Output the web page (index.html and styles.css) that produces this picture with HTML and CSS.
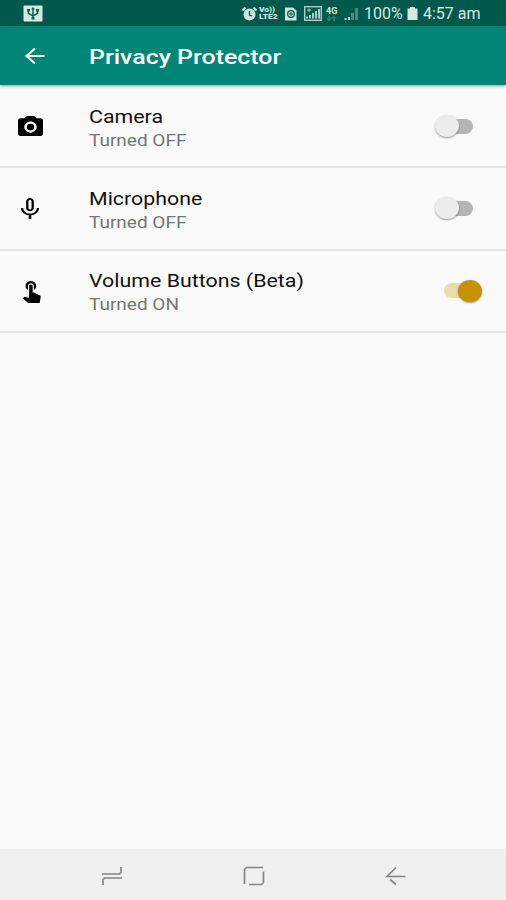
FILE: index.html
```html
<!DOCTYPE html>
<html lang="en">
  <head>
    <meta charset="UTF-8" />
    <meta name="viewport" content="width=device-width, initial-scale=1.0" />
    <title>Privacy Protector</title>
    <link rel="stylesheet" href="styles.css" />
  </head>
  <body>
    <div class="status-bar">
      <svg class="usb" width="20" height="17" viewBox="0 0 20 17">
        <rect x="0.500" y="0.500" width="19" height="16" rx="1" fill="#d5e9e4" />
        <path d="M10 3v11M5.500 5v3.500l4.500 2.500 4.500-2.500V5" fill="none" stroke="#175e50" stroke-width="1.500" />
        <path d="M8 4.500l2-2.500 2 2.500zM4 4h3v2.500H4zM13 4h3v2.500h-3zM8.500 12h3v2.500h-3z" fill="#175e50" />
      </svg>
      <div class="status-icons">
        <svg width="15" height="14" viewBox="0 0 15 14">
          <circle cx="7.500" cy="7.500" r="6" fill="#cce4de" />
          <path d="M0.500 3.500l3-3M14.500 3.500l-3-3" stroke="#cce4de" stroke-width="2" />
          <path d="M7.500 4v4l2.500 1" fill="none" stroke="#00594a" stroke-width="1.300" />
        </svg>
        <div class="volte"><span>Vo))</span><span>LTE2</span></div>
        <svg class="sim" width="13" height="14" viewBox="0 0 13 14">
          <path d="M1 0.500h8l3.500 3V13.500H1z" fill="#cce4de" />
          <circle cx="7" cy="7" r="3.300" fill="none" stroke="#00594a" stroke-width="1.300" />
          <path d="M7 5v4M5 7h4" stroke="#00594a" />
        </svg>
        <svg class="signal-box" width="18" height="15" viewBox="0 0 18 15">
          <rect x="0.700" y="0.700" width="16.600" height="13.600" fill="none" stroke="#a9d0c7" stroke-width="1.400" />
          <path d="M3 12.500v-2M6 12.500V9M9 12.500V7M12 12.500V5M15 12.500V3" stroke="#a9d0c7" stroke-width="2" />
          <path d="M3 4h4M5 2.500V6" stroke="#a9d0c7" />
        </svg>
        <div class="net"><span>4G</span>
          <svg width="11" height="5" viewBox="0 0 11 5">
            <path d="M3 0v3M1 2.500l2 2 2-2M8 5V2M6 2.500l2-2 2 2" fill="none" stroke="#619e91" />
          </svg>
        </div>
        <svg class="signal" width="15" height="13" viewBox="0 0 15 13">
          <path d="M1.500 13v-2M5 13v-3" stroke="#b9d9d1" stroke-width="2" />
          <path d="M8.500 13V6M12.500 13V1" stroke="#438c7d" stroke-width="3" />
        </svg>
        <span class="percent">100%</span>
        <svg class="battery" width="11" height="13" viewBox="0 0 11 13">
          <path d="M3 0h5v1.500h2.500V13H0.500V1.500H3z" fill="#d5e9e4" />
        </svg>
        <span class="time">4:57 am</span>
      </div>
    </div>

    <header class="app-bar">
      <svg class="back" width="20" height="18" viewBox="0 0 20 18">
        <path d="M19.500 9H1.500M10 1.500L1.500 9l8.500 7.500" fill="none" stroke="#fff" stroke-width="2" />
      </svg>
      <h1 class="title">Privacy Protector</h1>
    </header>

    <main class="settings">
      <div class="row">
        <div class="row-icon">
          <svg width="25" height="20" viewBox="2 2 20 18" preserveAspectRatio="none">
            <circle cx="12" cy="12" r="3" />
            <path fill-rule="evenodd" d="M9 2L7.170 4H4c-1.100 0-2 .9-2 2v12c0 1.100.9 2 2 2h16c1.100 0 2-.9 2-2V6c0-1.100-.9-2-2-2h-3.170L15 2H9zm3 15c-2.760 0-5-2.240-5-5s2.240-5 5-5 5 2.240 5 5-2.240 5-5 5z" />
          </svg>
        </div>
        <div class="row-text">
          <div class="label">Camera</div>
          <div class="state">Turned OFF</div>
        </div>
        <div class="switch"><span class="track"></span><span class="thumb"></span></div>
      </div>

      <div class="row">
        <div class="row-icon">
          <svg width="18" height="21" viewBox="5 2 14 19" preserveAspectRatio="none">
            <path d="M12 14c1.660 0 2.990-1.340 2.990-3L15 5c0-1.660-1.340-3-3-3S9 3.340 9 5v6c0 1.660 1.340 3 3 3zm-1.200-9.100c0-.66.54-1.200 1.200-1.200s1.200.54 1.200 1.200l-.01 6.200c0 .66-.53 1.200-1.190 1.200s-1.200-.54-1.200-1.200V4.900zm6.500 6.100c0 3-2.540 5.100-5.300 5.100S6.700 14 6.700 11H5c0 3.410 2.720 6.230 6 6.720V21h2v-3.280c3.280-.48 6-3.300 6-6.720h-1.700z" />
          </svg>
        </div>
        <div class="row-text">
          <div class="label">Microphone</div>
          <div class="state">Turned OFF</div>
        </div>
        <div class="switch"><span class="track"></span><span class="thumb"></span></div>
      </div>

      <div class="row">
        <div class="row-icon">
          <svg class="touch" width="19" height="23" viewBox="4 2 16 21" preserveAspectRatio="none">
            <path d="M9 11.240V7.500C9 6.120 10.120 5 11.500 5S14 6.120 14 7.500v3.740c1.210-.81 2-2.180 2-3.740C16 5.010 13.990 3 11.500 3S7 5.010 7 7.500c0 1.560.79 2.930 2 3.740zm9.840 4.630l-4.540-2.260c-.17-.07-.35-.11-.54-.11H13v-6c0-.83-.67-1.500-1.500-1.500S10 6.670 10 7.500v10.740l-3.430-.72c-.08-.01-.15-.03-.24-.03-.31 0-.59.13-.79.33l-.79.8 4.940 4.940c.27.27.65.44 1.060.44h6.790c.75 0 1.330-.55 1.440-1.280l.75-5.270c.01-.07.02-.14.02-.2 0-.62-.38-1.160-.91-1.380z" />
          </svg>
        </div>
        <div class="row-text">
          <div class="label">Volume Buttons (Beta)</div>
          <div class="state">Turned ON</div>
        </div>
        <div class="switch on"><span class="track"></span><span class="thumb"></span></div>
      </div>
    </main>

    <nav class="nav-bar">
      <svg width="22" height="20" viewBox="0 0 22 20">
        <path d="M1 8h17.500l1.500-1.500V1M21 12H3.500L2 13.500V19" />
      </svg>
      <svg width="22" height="20" viewBox="0 0 22 20">
        <path d="M1.500 18V3.500L3.500 1.500H20M20.500 5.500V16.500l-2 2H6" />
      </svg>
      <svg width="22" height="20" viewBox="0 0 22 20">
        <path d="M20.500 10.500H2L11 1.500M5 13.500l6 5" />
      </svg>
    </nav>
  </body>
</html>
```
FILE: styles.css
```css
* {
  box-sizing: border-box;
}

body {
  margin: 0;
  height: 900px;
  display: flex;
  flex-direction: column;
  background-color: #fafafa;
  font-family: Roboto, sans-serif;
  overflow: hidden;
}

svg {
  display: block;
  flex-shrink: 0;
}

.status-bar {
  height: 26px;
  padding: 1px 25px 0 23px;
  display: flex;
  align-items: center;
  justify-content: space-between;
  background-color: #00594a;
  color: #d5e9e4;
}

.status-icons {
  display: flex;
  align-items: center;
}

.volte {
  width: 20px;
  margin-left: 2px;
  font-size: 8px;
  font-weight: 900;
  line-height: 7px;
}

.volte span,
.net span {
  display: block;
}

.volte span {
  height: 7px;
  font-size: 7px;
  transform: scaleX(1.2);
  transform-origin: left;
}

.sim {
  margin-left: 5px;
}

.signal-box {
  margin-left: 7px;
}

.net {
  width: 13px;
  margin-left: 4px;
  font-size: 9px;
  font-weight: bold;
  line-height: 9px;
}

.signal {
  margin-left: 5px;
}

.percent,
.time {
  padding-top: 1px;
  font-size: 16px;
  line-height: 24px;
  white-space: nowrap;
}

.percent {
  width: 39px;
  margin-left: 5px;
}

.battery {
  margin-left: 4px;
}

.time {
  width: 58px;
  margin-left: 5px;
}

.app-bar {
  height: 59px;
  padding: 0 25px;
  display: flex;
  align-items: center;
  background-color: #008577;
  box-shadow: 0 1px 3px rgba(0, 0, 0, 0.4);
}

.title {
  margin: 2px 0 0 44px;
  color: #fff;
  font-size: 21px;
  font-weight: 500;
  line-height: 28px;
  white-space: nowrap;
  transform: scaleX(1.187);
  transform-origin: left;
}

.settings {
  flex: 1;
  padding-top: 1px;
}

.row {
  height: 82.3px;
  padding-right: 23px;
  display: grid;
  grid-template-columns: 89px 1fr 50px;
  align-items: center;
  border-bottom: 2px solid #e4e4e4;
}

.row-icon {
  width: 60px;
  display: flex;
  justify-content: center;
}

.touch {
  margin: 2px 0 0 2px;
}

/* glyphs are wider than the regular cut */
.row-text {
  padding-top: 4px;
  white-space: nowrap;
  transform: scaleX(1.187);
  transform-origin: left;
}

.label {
  color: #111;
  font-size: 18px;
  line-height: 24px;
}

.state {
  color: #757575;
  font-size: 16px;
  line-height: 23px;
}

.switch {
  display: grid;
  align-items: center;
}

.track,
.thumb {
  grid-area: 1 / 1;
}

.track {
  width: 29px;
  height: 15px;
  margin-left: 11px;
  border-radius: 8px;
  background-color: #b5b5b5;
}

.thumb {
  width: 24px;
  height: 22px;
  margin-left: 2px;
  border-radius: 50%;
  background-color: #ececec;
  box-shadow: 0 1px 2px rgba(0, 0, 0, 0.4);
}

.on .track {
  background-color: #eddcaa;
}

.on .thumb {
  margin-left: 25px;
  background-color: #c79200;
}

.nav-bar {
  height: 51px;
  padding: 3px 99px 0 101px;
  display: flex;
  align-items: center;
  justify-content: space-between;
  background-color: #efefef;
}

.nav-bar path {
  fill: none;
  stroke: #858585;
  stroke-width: 1.7;
}
```
